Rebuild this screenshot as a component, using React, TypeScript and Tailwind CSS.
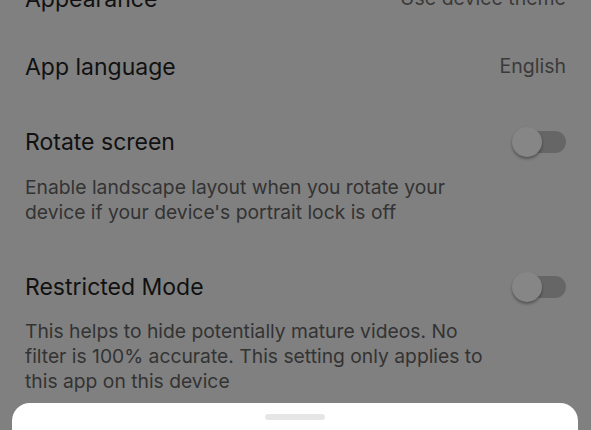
import React from "react";

function Toggle() {
  return (
    <div className="relative w-[54px] h-[30px] flex items-center">
      <div className="ml-auto w-[42px] h-[22px] rounded-full bg-[#666666]" />
      <div className="absolute left-0 top-0 w-[30px] h-[30px] rounded-full bg-[#868686] shadow-[0_2px_3px_rgba(0,0,0,0.35)]" />
    </div>
  );
}

function Row({ title, right }: { title: string; right?: React.ReactNode }) {
  return (
    <div className="flex items-center justify-between h-[30px]">
      <span className="text-[23px] leading-[30px] text-[#111111]">{title}</span>
      {right}
    </div>
  );
}

export default function App() {
  return (
    <div
      className="relative w-[591px] h-[430px] overflow-hidden bg-[#808080]"
      style={{ fontFamily: "Inter, 'Noto Sans', sans-serif" }}
    >
      <div className="px-[25px] mt-[-16px] flex flex-col">
        <Row
          title="Appearance"
          right={<span className="text-[19.5px] text-[#3a3a3a]">Use device theme</span>}
        />
        <div className="mt-[38px]">
          <Row title="App language" right={<span className="text-[19.5px] text-[#3a3a3a]">English</span>} />
        </div>
        <div className="mt-[45px]">
          <Row title="Rotate screen" right={<Toggle />} />
        </div>
        <p className="mt-[18px] text-[19.3px] leading-[25px] text-[#333333] w-[440px]">
          Enable landscape layout when you rotate your device if your device's portrait lock is off
        </p>
        <div className="mt-[47px]">
          <Row title="Restricted Mode" right={<Toggle />} />
        </div>
        <p className="mt-[17px] text-[19.3px] leading-[25px] text-[#333333] w-[470px]">
          This helps to hide potentially mature videos. No filter is 100% accurate. This setting only applies to this app on this device
        </p>
      </div>
      <div className="absolute left-[12px] right-[13px] top-[403px] h-[60px] bg-white rounded-t-[18px] flex justify-center">
        <div className="mt-[11px] w-[60px] h-[6px] rounded-full bg-[#e6e6e6]" />
      </div>
    </div>
  );
}
